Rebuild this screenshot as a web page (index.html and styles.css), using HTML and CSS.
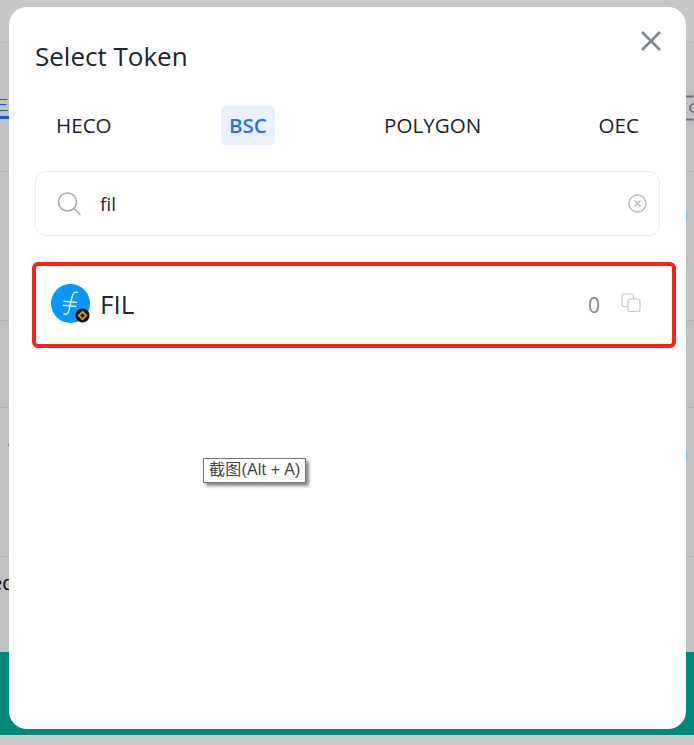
FILE: index.html
```html
<!DOCTYPE html>
<html lang="en">
<head>
<meta charset="utf-8">
<title>Select Token</title>
<link rel="stylesheet" href="styles.css">
</head>
<body>
<div class="page">
  <div class="page-top"></div>
  <div class="page-row row-a">
    <span class="edge-link">三</span>
    <svg class="edge-icon" width="8" height="26" viewBox="0 0 8 26"><path d="M0 1.500h8M0 24.500h8" stroke="#6f7480" stroke-width="2" fill="none"/><circle cx="8" cy="13" r="4" fill="none" stroke="#6f7480" stroke-width="2"/></svg>
  </div>
  <div class="page-row row-b"><i class="dot dot-right"></i></div>
  <div class="page-row row-c"></div>
  <div class="page-row row-d"><i class="dot dot-right"></i><i class="dot dot-left"></i></div>
  <div class="page-row row-e"><span class="edge-text">ed</span></div>
  <div class="page-band"></div>
  <div class="page-foot"></div>
</div>

<section class="modal">
  <header class="modal-head">
    <h1 class="modal-title">Select Token</h1>
    <svg class="close" width="22" height="22" viewBox="0 0 22 22"><path d="M2 2l18 18M20 2L2 20" stroke="#7f8594" stroke-width="2.600" fill="none"/></svg>
  </header>
  <nav class="tabs">
    <span class="tab">HECO</span>
    <span class="tab tab-active">BSC</span>
    <span class="tab">POLYGON</span>
    <span class="tab">OEC</span>
  </nav>
  <div class="search">
    <svg class="search-icon" width="24" height="24" viewBox="0 0 24 24"><circle cx="10.500" cy="10" r="9" fill="none" stroke="#a3a9b5" stroke-width="1.500"/><path d="M17 16.500l6.500 6.500" stroke="#a3a9b5" stroke-width="1.500" fill="none"/></svg>
    <span class="search-text">fil</span>
    <svg class="clear" width="19" height="19" viewBox="0 0 19 19"><circle cx="9.500" cy="9.500" r="8.500" fill="none" stroke="#b4b8c1" stroke-width="1.400"/><path d="M6.500 6.500l6 6M12.500 6.500l-6 6" stroke="#b4b8c1" stroke-width="1.500" fill="none"/></svg>
  </div>
  <div class="token">
    <span class="logo">
      <svg width="39" height="39" viewBox="0 0 39 39">
        <circle cx="19.500" cy="19.500" r="19.500" fill="#0a96fb"/>
        <path d="M27 8.500c-3.500-1.200-5.200.8-6 4.500l-3.200 14c-.7 3-2.500 4-5.300 2.800" fill="none" stroke="#e4f2fe" stroke-width="1.400"/>
        <path d="M12.500 17.200l13.500 1.200M11.800 21.300l13.500 1.200" fill="none" stroke="#e4f2fe" stroke-width="1.400"/>
        <circle cx="31.500" cy="31.500" r="7" fill="#14110c"/>
        <path d="M31.500 27.800l3.700 3.700-3.700 3.700-3.700-3.700z" fill="none" stroke="#c79a1c" stroke-width="2"/>
      </svg>
    </span>
    <span class="token-name">FIL</span>
    <span class="token-balance">0</span>
    <svg class="copy" width="20" height="20" viewBox="0 0 20 20"><path d="M6 13.500H3a2 2 0 0 1-2-2V3a2 2 0 0 1 2-2h7.500a2 2 0 0 1 2 2v3" fill="none" stroke="#c3c5c9" stroke-width="1.200"/><rect x="7" y="6" width="12" height="12.500" rx="2" fill="#fff" stroke="#c3c5c9" stroke-width="1.200"/></svg>
  </div>
</section>

<div class="tooltip">截图(Alt + A)</div>
</body>
</html>
```
FILE: styles.css
```css
* {
  box-sizing: border-box;
}

html,
body {
  margin: 0;
  height: 745px;
  overflow: hidden;
}

body {
  font-family: "Open Sans", "Noto Sans", sans-serif;
  background: #c2c2c2;
  color: #22252b;
}

.page {
  display: flex;
  flex-direction: column;
  height: 745px;
}

.page-top {
  height: 42px;
  background: #c6c7c8;
  border-bottom: 1px solid #bcbcbc;
}

.page-row {
  position: relative;
  background: #c1c1c1;
  border-bottom: 1px solid #b4b4b4;
}

.row-a { height: 130px; }
.row-b { height: 149px; }
.row-c { height: 87px; }
.row-d { height: 149px; }
.row-e {
  height: 95px;
  border-bottom: 0;
}

.edge-link {
  position: absolute;
  left: -6px;
  top: 50px;
  width: 15px;
  height: 27px;
  overflow: hidden;
  color: #1e57cc;
  font-family: "Noto Sans CJK SC", sans-serif;
  font-size: 15px;
  line-height: 24px;
  border-bottom: 3px solid #1e57cc;
}

.edge-icon {
  position: absolute;
  left: 686px;
  top: 53px;
}

.dot {
  position: absolute;
  width: 1px;
  height: 8px;
}

.dot-right {
  left: 686px;
  top: 42px;
  background: #7fb6dd;
}

.dot-left {
  left: 8px;
  top: 36px;
  height: 2px;
  background: #8a8a8a;
}

.edge-text {
  position: absolute;
  left: -9px;
  top: 12px;
  color: #111;
  font-size: 20px;
  line-height: 28px;
}

.page-band {
  height: 83px;
  background: #00897b;
}

.page-foot {
  flex: 1;
  background: #cbcbcb;
}

.modal {
  position: absolute;
  left: 9px;
  top: 7px;
  width: 677px;
  height: 722px;
  padding: 0 26px;
  background: #fff;
  border-radius: 18px;
}

.modal-head {
  display: flex;
  align-items: flex-start;
  justify-content: space-between;
  padding-top: 33px;
}

.modal-title {
  margin: 0;
  font-size: 26px;
  font-weight: 400;
  line-height: 33px;
}

.close {
  position: absolute;
  right: 24px;
  top: 23px;
}

.tabs {
  display: flex;
  justify-content: space-between;
  margin-top: 33px;
  padding: 0 13px;
}

.tab {
  padding: 0 8px;
  height: 39px;
  color: #1c1f24;
  font-size: 20.600px;
  line-height: 39px;
  border-radius: 5px;
}

.tab-active {
  background: #e8f1fe;
  color: #2b6ff0;
  font-weight: 600;
}

.search {
  display: flex;
  align-items: center;
  height: 65px;
  margin-top: 26px;
  padding: 0 12px 0 21px;
  border: 1px solid #eaecf2;
  border-radius: 11px;
}

.search-text {
  flex: 1;
  margin-left: 19px;
  font-size: 19px;
}

.token {
  display: flex;
  align-items: center;
  width: 644px;
  height: 86px;
  margin: 26px 0 0 -3px;
  padding: 0 31px 0 15px;
  border: 4px solid #fb2018;
  border-radius: 6px;
}

.logo {
  display: flex;
  width: 39px;
  height: 39px;
  margin-top: -3px;
}

.token-name {
  flex: 1;
  margin: -3px 0 0 10px;
  font-size: 26px;
}

.token-balance {
  margin-right: 21px;
  color: #82858a;
  font-size: 21px;
}

.copy {
  margin-top: -5px;
}

.tooltip {
  position: absolute;
  left: 203px;
  top: 458px;
  width: 103px;
  height: 25px;
  padding-left: 5px;
  background: #fff;
  border: 1px solid #767676;
  box-shadow: 3px 3px 3px #8a8a8a;
  color: #444;
  font-family: "Liberation Sans", "Noto Sans CJK SC", sans-serif;
  font-size: 16px;
  letter-spacing: 0.200px;
  line-height: 22px;
  white-space: nowrap;
}
```
